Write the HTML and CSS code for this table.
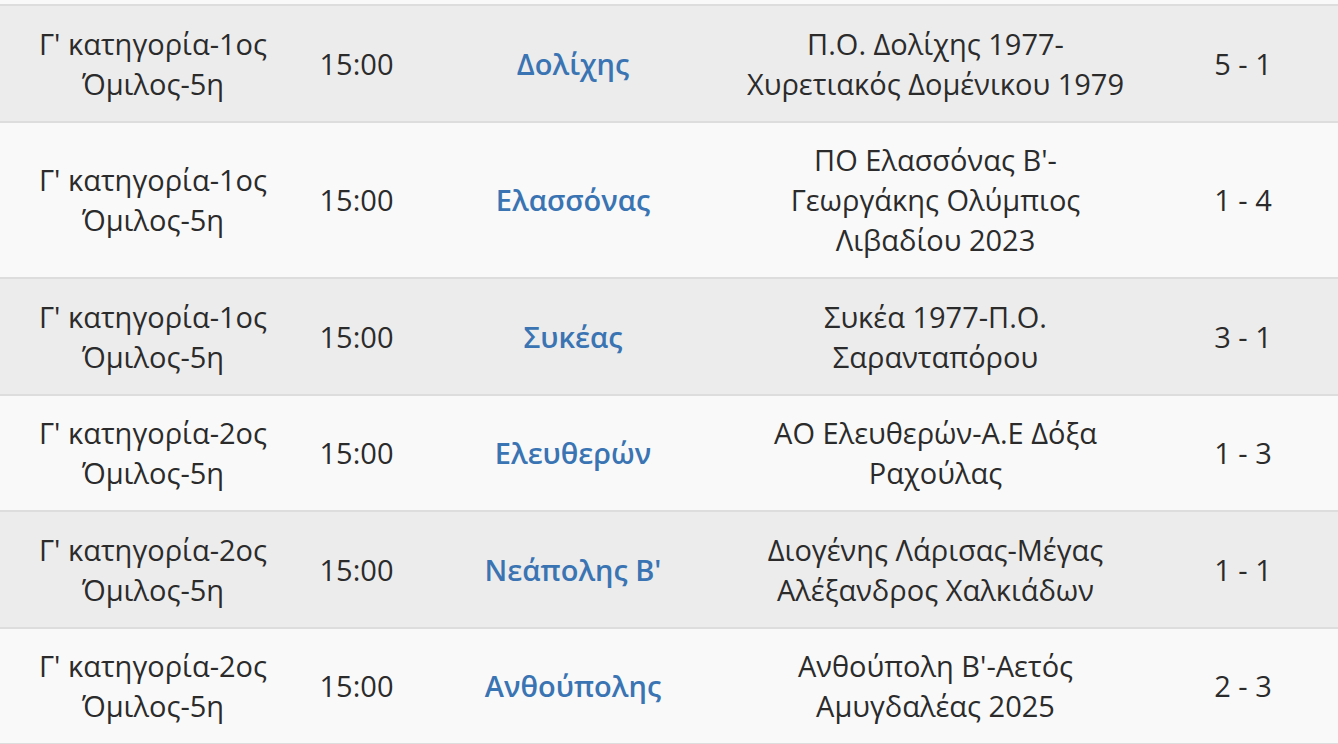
FILE: index.html
```html
<!DOCTYPE html>
<html lang="el">
<head>
<meta charset="utf-8">
<title>Αγώνες</title>
<link rel="stylesheet" href="styles.css">
</head>
<body>
<table class="matches">
  <colgroup>
    <col class="c-cat"><col class="c-time"><col class="c-field"><col class="c-teams"><col class="c-score">
  </colgroup>
  <tbody>
    <tr>
      <td>Γ' κατηγορία-1ος<br>Όμιλος-5η</td>
      <td>15:00</td>
      <td><a href="#">Δολίχης</a></td>
      <td>Π.Ο. Δολίχης 1977-<br>Χυρετιακός Δομένικου 1979</td>
      <td class="score">5 - 1</td>
    </tr>
    <tr>
      <td>Γ' κατηγορία-1ος<br>Όμιλος-5η</td>
      <td>15:00</td>
      <td><a href="#">Ελασσόνας</a></td>
      <td>ΠΟ Ελασσόνας Β'-<br>Γεωργάκης Ολύμπιος<br>Λιβαδίου 2023</td>
      <td class="score">1 - 4</td>
    </tr>
    <tr>
      <td>Γ' κατηγορία-1ος<br>Όμιλος-5η</td>
      <td>15:00</td>
      <td><a href="#">Συκέας</a></td>
      <td>Συκέα 1977-Π.Ο.<br>Σαρανταπόρου</td>
      <td class="score">3 - 1</td>
    </tr>
    <tr>
      <td>Γ' κατηγορία-2ος<br>Όμιλος-5η</td>
      <td>15:00</td>
      <td><a href="#">Ελευθερών</a></td>
      <td>ΑΟ Ελευθερών-Α.Ε Δόξα<br>Ραχούλας</td>
      <td class="score">1 - 3</td>
    </tr>
    <tr>
      <td>Γ' κατηγορία-2ος<br>Όμιλος-5η</td>
      <td>15:00</td>
      <td><a href="#">Νεάπολης Β'</a></td>
      <td>Διογένης Λάρισας-Μέγας<br>Αλέξανδρος Χαλκιάδων</td>
      <td class="score">1 - 1</td>
    </tr>
    <tr>
      <td>Γ' κατηγορία-2ος<br>Όμιλος-5η</td>
      <td>15:00</td>
      <td><a href="#">Ανθούπολης</a></td>
      <td>Ανθούπολη Β'-Αετός<br>Αμυγδαλέας 2025</td>
      <td class="score">2 - 3</td>
    </tr>
  </tbody>
</table>
</body>
</html>
```
FILE: styles.css
```css
html, body {
  margin: 0;
  padding: 0;
  background: #f9f9f9;
}
body {
  font-family: "Open Sans", "Noto Sans", sans-serif;
  font-size: 29px;
  line-height: 40px;
  color: #2b2b2b;
}
.matches {
  width: 1338px;
  table-layout: fixed;
  border-collapse: collapse;
  margin-top: 4px;
}
.c-cat { width: 306px; }
.c-time { width: 101px; }
.c-field { width: 332px; }
.c-teams { width: 393px; }
.c-score { width: 206px; }
.matches td {
  text-align: center;
  vertical-align: middle;
  white-space: nowrap;
  padding: 17.5px 0 17px;
  border-top: 2px solid #dddddd;
}
.matches tr:nth-child(odd) td { background: #ececec; }
.matches tr:nth-child(even) td { background: #f9f9f9; }
.matches tr:last-child td { border-bottom: 2px solid #dddddd; }
.matches td.score { padding-left: 16px; }
.matches a {
  color: #3a74b3;
  text-decoration: none;
  font-weight: 600;
}
```
